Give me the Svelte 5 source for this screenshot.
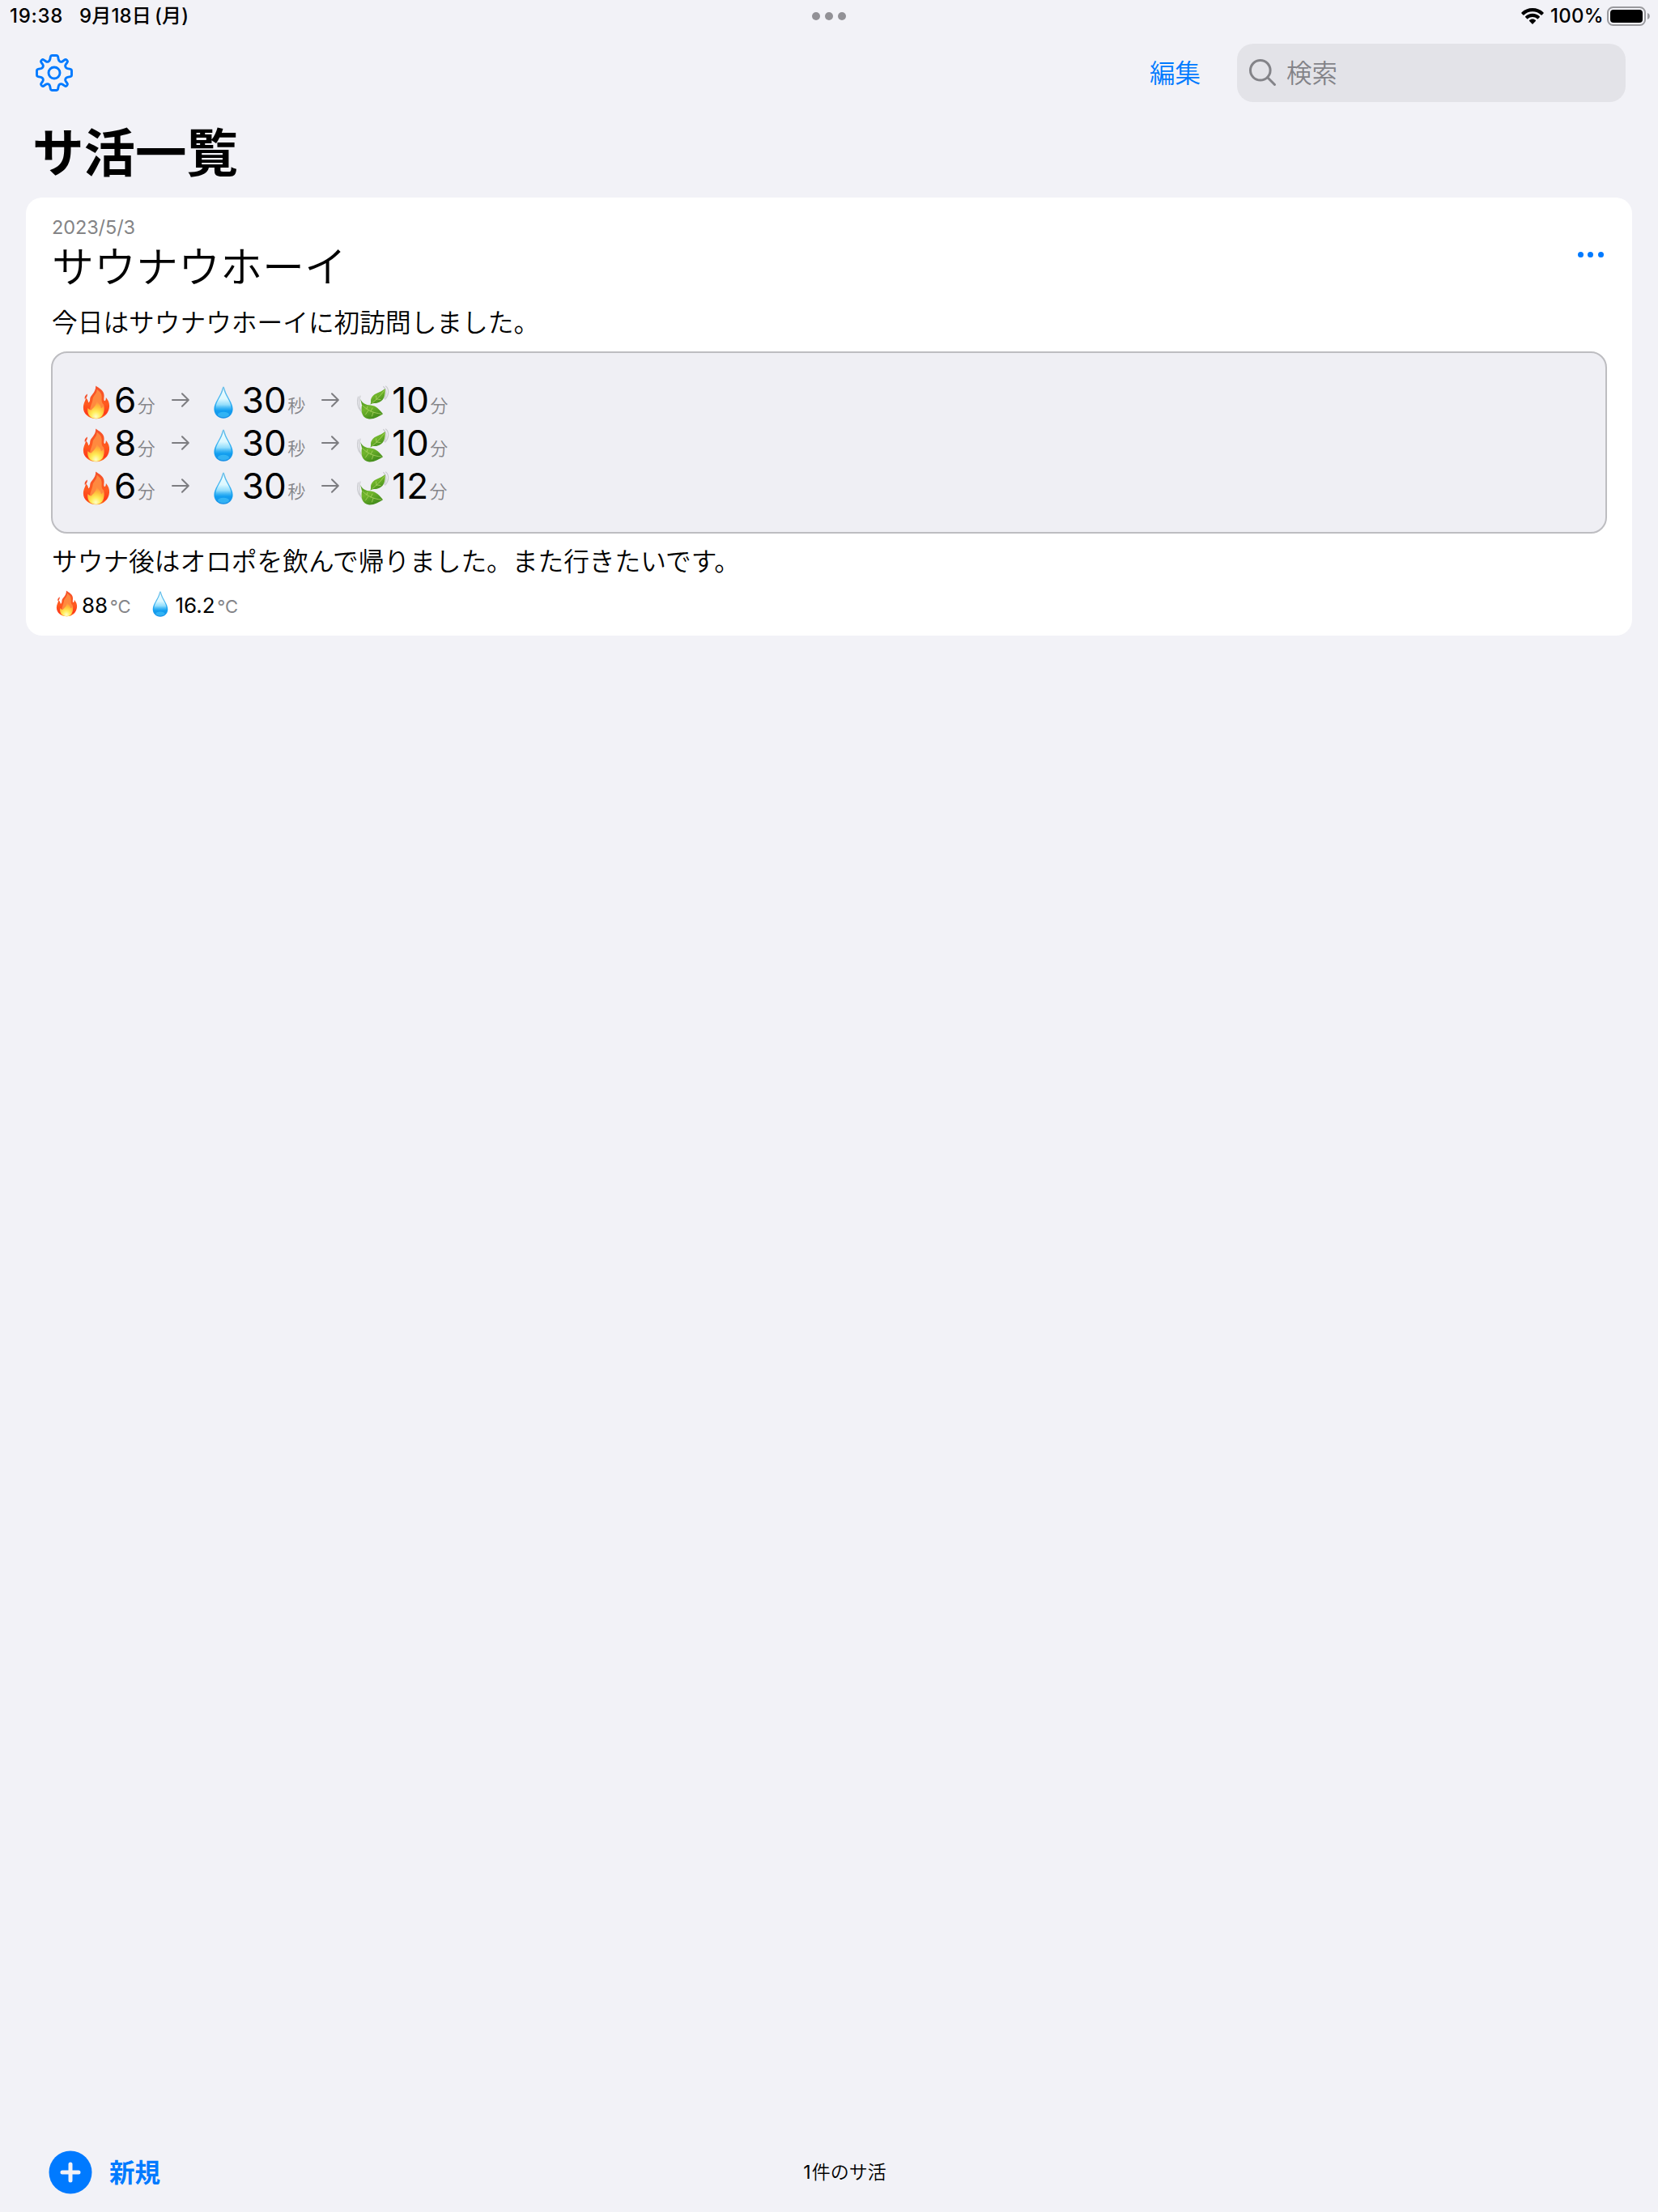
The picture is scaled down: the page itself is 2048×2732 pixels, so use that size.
<script>
  const rounds = [
    { sauna: 6, water: 30, rest: 10 },
    { sauna: 8, water: 30, rest: 10 },
    { sauna: 6, water: 30, rest: 12 },
  ];
</script>

<svelte:head><title>サ活一覧</title></svelte:head>

{#snippet fire(cls)}
  <svg class={cls} viewBox="0 0 34 42" aria-hidden="true">
    <defs>
      <linearGradient id="flameOuter" x1="0" y1="0" x2="0" y2="1">
        <stop offset="0" stop-color="#f4512c" />
        <stop offset="0.55" stop-color="#ff5a1f" />
        <stop offset="0.85" stop-color="#fe3a1a" />
        <stop offset="1" stop-color="#ff8a1f" />
      </linearGradient>
      <radialGradient id="flameInner" cx="0.5" cy="0.88" r="0.8">
        <stop offset="0" stop-color="#fffcc8" />
        <stop offset="0.35" stop-color="#ffee5a" />
        <stop offset="0.7" stop-color="#ffc03a" />
        <stop offset="1" stop-color="#ff9440" />
      </radialGradient>
    </defs>
    <path fill="url(#flameOuter)" d="M16.2 0.6C20 3.4 26.800 6 26.600 13C26.500 16 25.800 18.500 27.200 19.200C28.600 18.900 28.900 16.600 28.800 14.800C31.800 18.400 33.500 22 33 26.500C32.400 34.500 26 41.200 17 41.200C8 41.200 1 35.500 0.900 27.500C0.900 22.500 3.600 19 4.100 15.600C6 17 6.900 18.800 7.100 21.200C8.400 21 9.200 19.400 9.200 16.800C9.400 12 16.600 9 16.200 0.600Z" />
    <path fill="#f4512c" d="M6 10.400C3.400 11.800 2 14.200 2.800 17C5 15.400 6 13.200 6 10.400Z" />
    <path fill="#ff9a4a" d="M17.500 4.500C21.500 8 24.200 10 23.600 16C23.200 20 24.400 22.500 26 23.600C28.600 30 24.800 38 17 39C10 38.600 7.400 31 10.400 24.500C11.500 21.500 12.200 20 12.600 16.500C13.400 12.500 18.200 10 17.500 4.500Z" opacity="0.75" />
    <path fill="url(#flameInner)" d="M17.600 19.500C19.600 22.600 22.400 24 22.800 28C24.200 28 25.200 26.600 25.600 25C28.200 32.500 25 40.500 17 41C8.800 40.800 5.200 35 6.400 28C8 29.500 9.200 30.400 10.800 30.400C13.400 27.600 16.600 25.400 17.600 19.500Z" />
  </svg>
{/snippet}

{#snippet drop(cls)}
  <svg class={cls} viewBox="0 0 24 40" aria-hidden="true">
    <defs>
      <linearGradient id="dropBody" x1="0" y1="0" x2="0" y2="1">
        <stop offset="0" stop-color="#6fc0e8" />
        <stop offset="0.45" stop-color="#3fb4f2" />
        <stop offset="0.75" stop-color="#129ff0" />
        <stop offset="1" stop-color="#1a90e6" />
      </linearGradient>
      <linearGradient id="dropShine" x1="0" y1="0" x2="0" y2="1">
        <stop offset="0" stop-color="#eefcff" />
        <stop offset="0.4" stop-color="#dcf8ff" />
        <stop offset="0.62" stop-color="#a4e6fe" stop-opacity="0.85" />
        <stop offset="0.85" stop-color="#4cc0f8" stop-opacity="0" />
      </linearGradient>
    </defs>
    <path fill="url(#dropBody)" d="M12 0.400C12.900 0.400 13.400 2.200 14 4.400C16.400 13 23.600 20.200 23.600 28.200C23.600 34.800 18.600 39.700 12 39.700C5.400 39.700 0.400 34.800 0.400 28.200C0.400 20.200 7.600 13 10 4.400C10.600 2.200 11.100 0.400 12 0.400Z" />
    <path fill="url(#dropShine)" d="M12 2.500C13.600 12 21.600 18.400 21.800 28C21.800 38 2.200 38 2.200 28C2.400 18.400 10.400 12 12 2.500Z" />
    <ellipse cx="12" cy="35" rx="7" ry="3.200" fill="#4acbfb" opacity="0.55" />
  </svg>
{/snippet}

{#snippet leaf()}
  <svg class="leaf" viewBox="0 0 40 42" aria-hidden="true">
    <defs>
      <linearGradient id="leafBody" x1="0" y1="0" x2="0.5" y2="1">
        <stop offset="0" stop-color="#4a9420" />
        <stop offset="0.5" stop-color="#72b62c" />
        <stop offset="1" stop-color="#448d1c" />
      </linearGradient>
    </defs>
    <g fill="none" stroke="#cbccd0" stroke-width="1.200" stroke-linecap="round">
      <path d="M1.600 14C-0.400 20 0.200 27 4.400 31" />
      <path d="M4 13C1.600 19 2.400 29 6.400 34" />
      <path d="M35.500 1C40 4.500 39.600 12 34.800 17" />
      <path d="M32.600 1.500C37 5 37 12 33.600 16" />
    </g>
    <path fill="url(#leafBody)" d="M4.200 16.800C6.600 22.500 10.400 24 17 24.600C24 25.200 28 30.500 32 35.200C26.600 38.400 21.200 41.800 15 41.400C6.400 40.600 4.500 33 6 24.600C5.600 21.600 4.600 19.400 4.200 16.800Z" />
    <path fill="url(#leafBody)" d="M34.600 4C35.400 11.600 33.400 20 24.600 21.800C22.400 22.400 20.200 21.200 16.200 23.600C18.400 20.600 15.600 18.600 18.400 14.400C22 9.200 28.400 9.400 34.600 4Z" />
    <g fill="none" stroke="#b6d96b" stroke-width="0.700" stroke-linecap="round">
      <path d="M6.600 24.600C13 31 20 34 30 35.200M12 29L13 26M17 32L19 28M14 31L10.400 36M20 33.400L18.400 38" />
      <path d="M18.600 21.600C24 17.600 29 13 33.400 6.600M24 17.400L23.600 13M25 17L29 17.600" />
    </g>
  </svg>
{/snippet}

{#snippet arrow()}
  <svg class="arrow" viewBox="0 0 22 18" aria-hidden="true">
    <path d="M1 9H20.600M13 1.200L20.800 9L13 16.800" />
  </svg>
{/snippet}

<div class="screen">
  <div class="status">
    <div class="clock"><span class="time">19:38</span><span class="date">9<b>月</b>18<b>日</b><i>(</i><b>月</b>)</span></div>
    <div class="multitask"><span></span><span></span><span></span></div>
    <div class="power">
      <svg class="wifi" viewBox="0 0 28 20" aria-hidden="true">
        <path d="M14 0C19.300 0 24.100 2 27.600 5.400C27.900 5.700 27.900 6.100 27.600 6.400L25.600 8.400C25.300 8.700 24.900 8.700 24.600 8.400C21.800 5.700 18.100 4.200 14 4.200S6.200 5.700 3.400 8.400C3.100 8.700 2.700 8.700 2.400 8.400L0.400 6.400C0.100 6.100 0.100 5.700 0.400 5.400C3.900 2 8.700 0 14 0Z" />
        <path d="M14 6.800C17.400 6.800 20.500 8.100 22.800 10.200C23.100 10.500 23.100 10.900 22.800 11.200L20.800 13.200C20.500 13.500 20.100 13.500 19.800 13.200C18.200 11.800 16.200 11 14 11S9.800 11.800 8.200 13.200C7.900 13.500 7.500 13.500 7.200 13.200L5.200 11.200C4.900 10.900 4.900 10.500 5.200 10.200C7.500 8.100 10.600 6.800 14 6.800Z" />
        <path d="M14 13.400C15.500 13.400 16.900 14 17.900 14.900C18.200 15.200 18.200 15.600 17.900 15.900L14.500 19.400C14.200 19.700 13.800 19.700 13.500 19.400L10.100 15.900C9.800 15.600 9.800 15.200 10.100 14.900C11.100 14 12.500 13.400 14 13.400Z" />
      </svg>
      <span class="percent">100%</span>
      <svg class="battery" viewBox="0 0 54 24" aria-hidden="true">
        <rect x="1" y="1" width="46" height="22" rx="6.500" fill="none" stroke="#99999d" stroke-width="2" />
        <rect x="4" y="4" width="40" height="16" rx="4" />
        <path fill="#99999d" d="M50 8C53.800 9.200 53.800 14.800 50 16Z" />
      </svg>
    </div>
  </div>

  <header class="toolbar">
    <svg class="gear" viewBox="-23 -23 46 46" aria-hidden="true">
      <path d="M-3 -21.500H3Q4.300 -21.500 4.600 -20L5.300 -16.300Q5.700 -14.600 7.300 -13.900Q8.900 -13.200 10.300 -14.200L13.100 -16.200Q14.200 -17 15.200 -16L16 -15.200Q17 -14.200 16.200 -13.100L14.200 -10.300Q13.200 -8.900 13.900 -7.300Q14.600 -5.700 16.300 -5.300L20 -4.600Q21.500 -4.300 21.500 -3V3Q21.500 4.300 20 4.600L16.300 5.300Q14.600 5.700 13.900 7.300Q13.200 8.900 14.200 10.300L16.200 13.100Q17 14.200 16 15.200L15.200 16Q14.200 17 13.100 16.200L10.300 14.200Q8.900 13.200 7.300 13.900Q5.700 14.600 5.300 16.300L4.600 20Q4.300 21.500 3 21.500H-3Q-4.300 21.500 -4.600 20L-5.300 16.300Q-5.700 14.600 -7.300 13.900Q-8.900 13.200 -10.300 14.200L-13.100 16.200Q-14.200 17 -15.200 16L-16 15.200Q-17 14.200 -16.200 13.100L-14.200 10.300Q-13.200 8.900 -13.900 7.300Q-14.600 5.700 -16.300 5.300L-20 4.600Q-21.500 4.300 -21.500 3V-3Q-21.500 -4.300 -20 -4.600L-16.300 -5.300Q-14.600 -5.700 -13.900 -7.300Q-13.200 -8.900 -14.200 -10.300L-16.200 -13.100Q-17 -14.200 -16 -15.200L-15.200 -16Q-14.200 -17 -13.100 -16.200L-10.300 -14.200Q-8.900 -13.200 -7.300 -13.900Q-5.700 -14.600 -5.300 -16.300L-4.600 -20Q-4.300 -21.500 -3 -21.500Z" />
      <circle r="7" />
    </svg>
    <div class="actions">
      <span class="edit">編集</span>
      <div class="search">
        <svg viewBox="0 0 34 34" aria-hidden="true"><circle cx="13.800" cy="13.800" r="12.300" /><path d="M22.800 22.800L31.500 31.500" /></svg>
        <span>検索</span>
      </div>
    </div>
  </header>

  <h1>サ活一覧</h1>

  <article class="card">
    <div class="head">
      <div>
        <div class="day">2023/5/3</div>
        <h2>サウナウホーイ</h2>
      </div>
      <div class="more"><span></span><span></span><span></span></div>
    </div>
    <p class="before">今日はサウナウホーイに初訪問しました。</p>
    <div class="rounds">
      {#each rounds as r}
        <div class="round">
          {@render fire("fire")}<span class="num">{r.sauna}</span><span class="unit">分</span>
          {@render arrow()}
          {@render drop("drop")}<span class="num">{r.water}</span><span class="unit">秒</span>
          {@render arrow()}
          {@render leaf()}<span class="num">{r.rest}</span><span class="unit">分</span>
        </div>
      {/each}
    </div>
    <p class="after">サウナ後はオロポを飲んで帰りました。また行きたいです。</p>
    <div class="temps">
      {@render fire("fire-s")}<span class="deg">88</span><span class="c">°C</span>
      {@render drop("drop-s")}<span class="deg">16.2</span><span class="c">°C</span>
    </div>
  </article>

  <footer>
    <div class="new">
      <svg viewBox="0 0 54 54" aria-hidden="true">
        <circle cx="27" cy="27" r="26.500" /><path d="M27 17V37M17 27H37" />
      </svg>
      <span>新規</span>
    </div>
    <div class="count"><b>1</b>件のサ活</div>
    <div></div>
  </footer>
</div>

<style>
  :global(body) { margin: 0; background: #f2f2f7; }
  .screen {
    width: 2048px;
    height: 2732px;
    box-sizing: border-box;
    display: flex;
    flex-direction: column;
    overflow: hidden;
    background: #f2f2f7;
    color: #000;
    font-family: Inter, "Noto Sans CJK JP", sans-serif;
    white-space: nowrap;
  }
  svg { display: block; flex: none; }
  h1, h2, p { margin: 0; font-weight: 400; }

  .status {
    height: 40px;
    padding: 0 12px;
    display: grid;
    grid-template-columns: 1fr auto 1fr;
    align-items: center;
    font-size: 24px;
    line-height: 40px;
    font-weight: 500;
  }
  .clock { display: flex; gap: 21px; }
  .time { width: 65px; letter-spacing: 0.7px; }
  .date { letter-spacing: 0.15px; }
  .date b { font-weight: 500; }
  .date i { font-style: normal; margin-left: 4px; }
  .multitask { display: flex; gap: 6px; }
  .multitask span { width: 10px; height: 10px; border-radius: 50%; background: #929196; }
  .power { display: flex; justify-content: flex-end; align-items: center; margin-right: -12px; }
  .wifi { width: 28px; height: 20px; margin-right: 8px; }
  .percent { width: 66px; letter-spacing: 0.3px; }
  .battery { width: 54px; height: 24px; margin-left: 4px; margin-right: 9px; }

  .toolbar {
    height: 100px;
    padding: 0 40px 0 43.500px;
    display: flex;
    align-items: center;
    justify-content: space-between;
  }
  .gear { width: 46px; height: 46px; fill: none; stroke: #007aff; stroke-width: 2.900; stroke-linejoin: round; }
  .actions { display: flex; align-items: center; }
  .edit { width: 108px; padding-bottom: 4px; font-size: 31.500px; font-weight: 350; color: #007aff; }
  .search {
    width: 480px;
    height: 72px;
    box-sizing: border-box;
    padding-left: 15px;
    border-radius: 20px;
    display: flex;
    align-items: center;
    gap: 12px;
    background: #e3e3e8;
    color: #838388;
    font-size: 31.500px;
    font-weight: 350;
  }
  .search span { padding-bottom: 4px; }
  .search svg { width: 34px; height: 34px; fill: none; stroke: #838388; stroke-width: 3; stroke-linecap: round; }

  h1 { height: 104px; padding-left: 40px; line-height: 98px; font-size: 63.500px; font-weight: 700; }

  .card {
    height: 541px;
    margin: 0 32px;
    padding: 24px 32px 0;
    box-sizing: border-box;
    border-radius: 20px;
    background: #fff;
  }
  .head { height: 108px; display: flex; justify-content: space-between; }
  .day { height: 28px; line-height: 26px; font-size: 23.500px; letter-spacing: -0.1px; color: #848486; }
  h2 { height: 68px; line-height: 69px; font-size: 52px; font-weight: 350; }
  .more { display: flex; gap: 5.300px; margin: 43px 3.500px 0 0; }
  .more span { width: 7px; height: 7px; border-radius: 50%; background: #007aff; }
  p { font-size: 31.700px; line-height: 46px; font-weight: 350; }
  .before { height: 58px; }

  .rounds {
    height: 225px;
    margin: 0 -1px;
    box-sizing: border-box;
    padding: 34px 36px 0 37px;
    border: 2px solid #bdbdc1;
    border-radius: 20px;
    background: #efeff4;
  }
  .round { height: 53px; display: flex; align-items: baseline; line-height: 48px; }
  .round svg { align-self: flex-start; }
  .fire { width: 34px; height: 42px; margin: 6px 5px 0 0; }
  .drop { width: 24px; height: 40px; margin: 7px 11px 0 30px; }
  .leaf { width: 40px; height: 42px; margin: 6px 3px 0 22px; }
  .num { font-size: 44px; }
  .unit { width: 22px; font-size: 22px; font-weight: 350; margin-left: 1.500px; color: #858589; position: relative; top: -1px; }
  .arrow { width: 22px; height: 18px; margin: 15px 0 0 20px; fill: none; stroke: #7d7d81; stroke-width: 2; stroke-linecap: round; stroke-linejoin: round; }
  .after { margin-top: 12px; height: 56px; }

  .temps { height: 40px; display: flex; align-items: baseline; line-height: 41px; }
  .temps svg { align-self: flex-start; }
  .fire-s { width: 27px; height: 33px; margin: 2px 5px 0 5px; }
  .drop-s { width: 20px; height: 32px; margin: 3px 9px 0 26px; }
  .deg { font-size: 26px; }
  .c { font-size: 22px; margin-left: 2.500px; color: #858589; }

  footer {
    margin-top: auto;
    height: 98px;
    padding: 0 60px;
    display: grid;
    grid-template-columns: 1fr auto 1fr;
    align-items: center;
  }
  .new { display: flex; align-items: center; gap: 21px; font-size: 31.500px; font-weight: 700; color: #007aff; }
  .new span { padding-bottom: 4px; }
  .new svg { width: 54px; height: 54px; fill: #007aff; }
  .new path { stroke: #f2f2f7; stroke-width: 5; stroke-linecap: round; }
  .count { font-size: 23px; padding: 0 0 4px 39px; font-weight: 350; }
  .count b { font-weight: 400; margin-right: 1px; }
</style>
